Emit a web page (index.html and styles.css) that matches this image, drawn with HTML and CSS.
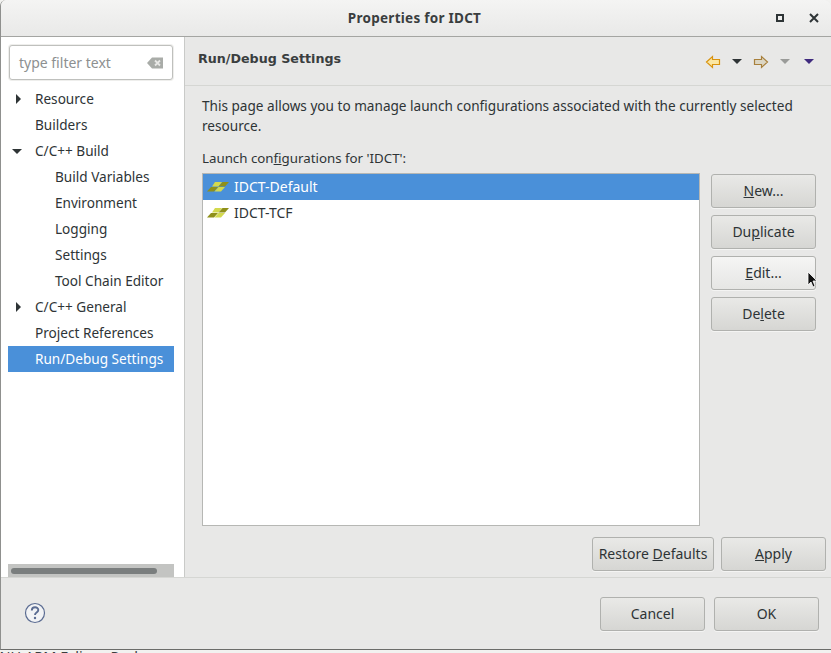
FILE: index.html
```html
<!DOCTYPE html>
<html lang="en">
<head>
  <meta charset="UTF-8">
  <title>Properties for IDCT</title>
  <link rel="stylesheet" href="styles.css">
</head>
<body>
  <div class="window">
    <header class="titlebar">
      <span class="title">Properties for IDCT</span>
      <span class="win-btn win-max"></span>
      <svg class="win-close" width="10" height="10" viewBox="0 0 10 10"><path d="M1 1l8 8M9 1l-8 8" stroke="#2e3436" stroke-width="2" fill="none"/></svg>
    </header>

    <div class="content">
      <aside class="sidebar">
        <div class="filter">
          <span class="filter-text">type filter text</span>
          <svg width="16" height="12" viewBox="0 0 16 12"><path d="M0 6l5-5.500h11v11H5z" fill="#a9aca8"/><path d="M8 3.500l5 5M13 3.500l-5 5" stroke="#e8e8e6" stroke-width="1.800"/></svg>
        </div>
        <ul class="tree">
          <li class="row"><i class="arrow-right"></i>Resource</li>
          <li class="row">Builders</li>
          <li class="row"><i class="arrow-down"></i>C/C++ Build</li>
          <li class="row sub">Build Variables</li>
          <li class="row sub">Environment</li>
          <li class="row sub">Logging</li>
          <li class="row sub">Settings</li>
          <li class="row sub">Tool Chain Editor</li>
          <li class="row"><i class="arrow-right"></i>C/C++ General</li>
          <li class="row">Project References</li>
          <li class="row selected">Run/Debug Settings</li>
        </ul>
        <div class="hscroll"><div class="hscroll-thumb"></div></div>
      </aside>

      <main class="page">
        <div class="page-head">
          <h2>Run/Debug Settings</h2>
          <div class="nav-icons">
            <svg width="16" height="14" viewBox="0 0 16 14"><path d="M1.500 7l6-5.500v3h7v5h-7v3z" fill="#fbe7a4" stroke="#d9930f" stroke-width="1.200"/></svg>
            <i class="drop dark"></i>
            <svg class="nav-fwd" width="16" height="14" viewBox="0 0 16 14"><path d="M14.500 7l-6-5.500v3h-7v5h7v3z" fill="#dcd6c4" stroke="#a8803c" stroke-width="1.200"/></svg>
            <i class="drop grey"></i>
            <i class="drop purple"></i>
          </div>
        </div>

        <div class="page-body">
          <p class="desc">This page allows you to manage launch configurations associated with the currently selected resource.</p>
          <p class="list-label">Launch con<u>f</u>igurations for 'IDCT':</p>
          <div class="config-area">
            <ul class="config-list">
              <li class="config selected">
                <svg width="22" height="10" viewBox="0 0 22 10"><path d="M8 0h7l-3.500 4.500H5z" fill="#d3d94e"/><path d="M15.500 0H22l-4 4.500h-6.500z" fill="#8f9019"/><path d="M4 5h7L7 9.500H0z" fill="#8f9019"/><path d="M11.500 5H18l-4 4.500H7.500z" fill="#d3d94e"/></svg>
                IDCT-Default
              </li>
              <li class="config">
                <svg width="22" height="10" viewBox="0 0 22 10"><path d="M8 0h7l-3.500 4.500H5z" fill="#d3d94e"/><path d="M15.500 0H22l-4 4.500h-6.500z" fill="#8f9019"/><path d="M4 5h7L7 9.500H0z" fill="#8f9019"/><path d="M11.500 5H18l-4 4.500H7.500z" fill="#d3d94e"/></svg>
                IDCT-TCF
              </li>
            </ul>
            <div class="side-buttons">
              <button class="btn"><u>N</u>ew...</button>
              <button class="btn">Du<u>p</u>licate</button>
              <button class="btn hover"><u>E</u>dit...</button>
              <button class="btn">De<u>l</u>ete</button>
            </div>
          </div>
          <div class="page-actions">
            <button class="btn restore">Restore <u>D</u>efaults</button>
            <button class="btn"><u>A</u>pply</button>
          </div>
        </div>
      </main>
    </div>

    <footer class="footer">
      <svg class="help" width="22" height="22" viewBox="0 0 22 22"><circle cx="11" cy="11" r="9.500" fill="#f2f3f5" stroke="#5b6c92" stroke-width="1.200"/><path d="M7.800 8.500c0-4.200 6.500-4.200 6.500-.4 0 2.500-3.300 2.500-3.300 4.900" fill="none" stroke="#5b6c92" stroke-width="1.900"/><circle cx="11" cy="16" r="1.200" fill="#5b6c92"/></svg>
      <div class="footer-buttons">
        <button class="btn">Cancel</button>
        <button class="btn">OK</button>
      </div>
    </footer>
  </div>
  <div class="behind"><span class="behind-text">GNU ARM Eclipse Packages</span></div>

  <svg class="cursor" width="12" height="18" viewBox="0 0 12 18"><path d="M1 1v13l3-3 2 5 2-1-2-5h4z" fill="#111" stroke="#fff" stroke-width=".8"/></svg>
</body>
</html>
```

FILE: styles.css
```css
* {
  box-sizing: border-box;
}

html, body {
  margin: 0;
  height: 653px;
  overflow: hidden;
}

body {
  font-family: "Noto Sans", "Open Sans", sans-serif;
  font-size: 14px;
  color: #2e3436;
  background: #f2f2f0;
}

ul {
  list-style: none;
  margin: 0;
  padding: 0;
}

p {
  margin: 0;
}

.window {
  height: 650px;
  display: flex;
  flex-direction: column;
  background: #e8e8e7;
  border-left: 1px solid #8f908e;
  border-bottom: 1px solid #6b6c6a;
  border-radius: 6px 6px 0 0;
  overflow: hidden;
}

.titlebar {
  height: 37px;
  flex: none;
  display: flex;
  align-items: center;
  position: relative;
  background: linear-gradient(#f4f4f3, #e9e9e8);
  border-bottom: 1px solid #a4a5a2;
}

.title {
  position: absolute;
  left: 0;
  right: 3px;
  text-align: center;
  font-weight: 700;
  font-size: 13.500px;
  letter-spacing: .27px;
  color: #3a3e3f;
}

.win-btn {
  position: absolute;
  left: 775px;
  top: 14px;
  width: 8px;
  height: 8px;
  border: 2px solid #2e3436;
}

.win-close {
  position: absolute;
  left: 808px;
  top: 13px;
}

.content {
  flex: 1;
  display: flex;
  min-height: 0;
}

.sidebar {
  width: 184px;
  flex: none;
  display: flex;
  flex-direction: column;
  background: #fff;
  border-right: 1px solid #c9cac8;
  padding: 8px 10px 0 7px;
}

.filter {
  height: 35px;
  flex: none;
  margin: 0 1px;
  display: flex;
  align-items: center;
  justify-content: space-between;
  padding: 0 9px;
  background: #fff;
  border: 1px solid #bfc0bd;
  border-radius: 3px;
  box-shadow: 0 0 0 1px #eeeeec;
}

.filter-text {
  color: #8d9091;
}

.tree {
  flex: 1;
  margin-top: 6px;
  font-size: 13.600px;
}

.row {
  height: 26px;
  line-height: 26px;
  padding-left: 27px;
  position: relative;
  white-space: nowrap;
}

.row.sub {
  padding-left: 47px;
}

.row.selected {
  background: #4a90d9;
  color: #fff;
}

.arrow-right {
  position: absolute;
  left: 8px;
  top: 8px;
  border-left: 5px solid #2e3436;
  border-top: 5px solid transparent;
  border-bottom: 5px solid transparent;
}

.arrow-down {
  position: absolute;
  left: 4px;
  top: 11px;
  border-top: 5px solid #2e3436;
  border-left: 5px solid transparent;
  border-right: 5px solid transparent;
}

.hscroll {
  height: 13px;
  flex: none;
  padding: 4px 17px 3px 3px;
  background: #c3c4c2;
}

.hscroll-thumb {
  height: 6px;
  border-radius: 3px;
  background: #7a7e7e;
}

.page {
  flex: 1;
  display: flex;
  flex-direction: column;
  min-width: 0;
}

.page-head {
  height: 49px;
  flex: none;
  display: flex;
  align-items: center;
  justify-content: space-between;
  padding: 0 17px 5px 13px;
  border-bottom: 1px solid #d5d6d3;
}

.page-head h2 {
  margin: 0;
  font-family: "DejaVu Sans", sans-serif;
  font-size: 12.700px;
  font-weight: 700;
  color: #3a3e3f;
}

.nav-icons {
  display: flex;
  align-items: center;
  padding-top: 6px;
}

.drop {
  border-top: 5px solid #2e3436;
  border-left: 5px solid transparent;
  border-right: 5px solid transparent;
  margin-left: 11px;
}

.drop.grey {
  border-top-color: #9a9b99;
  margin-left: 11px;
  margin-right: 14px;
}

.drop.purple {
  border-top-color: #3f2a7e;
  margin-left: 0;
}

.nav-fwd {
  margin-left: 11px;
}

.page-body {
  flex: 1;
  display: flex;
  flex-direction: column;
  padding: 10px 5px 6px 17px;
  min-height: 0;
}

.desc {
  line-height: 20px;
  width: 610px;
  font-size: 13.600px;
}

.list-label {
  margin-top: 12px;
  line-height: 20px;
  font-size: 13.300px;
}

.config-area {
  flex: 1;
  display: flex;
  gap: 11px;
  margin-top: 5px;
  min-height: 0;
}

.config-list {
  width: 498px;
  height: 353px;
  background: #fff;
  border: 1px solid #b6b7b4;
}

.config {
  height: 26px;
  display: flex;
  align-items: center;
  gap: 5px;
  padding: 0 0 1px 4px;
}

.config svg {
  margin-top: 1px;
}

.config.selected {
  background: #4a90d9;
  color: #fff;
}

.side-buttons {
  display: flex;
  flex-direction: column;
  gap: 7px;
  width: 105px;
  padding-top: 1px;
}

.btn {
  width: 105px;
  height: 34px;
  padding: 0 0 2px;
  font: inherit;
  color: #2e3436;
  background: linear-gradient(#e9e9e7, #d6d6d3);
  border: 1px solid #b0b1ae;
  border-radius: 3px;
  box-shadow: 0 1px 0 #f4f4f3;
}

.btn.hover {
  background: linear-gradient(#f5f5f4, #e6e6e4);
}

.btn.restore {
  width: 122px;
}

.page-actions {
  flex: none;
  display: flex;
  justify-content: flex-end;
  gap: 7px;
}

.footer {
  height: 72px;
  flex: none;
  display: flex;
  align-items: center;
  justify-content: space-between;
  padding: 0 12px 0 23px;
  border-top: 1px solid #d5d6d3;
}

.footer .btn {
  padding: 0;
}

.help {
  margin-top: -1px;
}

.footer-buttons {
  display: flex;
  gap: 9px;
}

.behind {
  height: 3px;
  overflow: hidden;
  color: #3a3e3f;
  font-size: 14.500px;
  line-height: 14px;
}

.behind-text {
  display: block;
  margin: -1px 0 0 -11px;
  white-space: nowrap;
}

.cursor {
  position: absolute;
  left: 807px;
  top: 271px;
}
```
